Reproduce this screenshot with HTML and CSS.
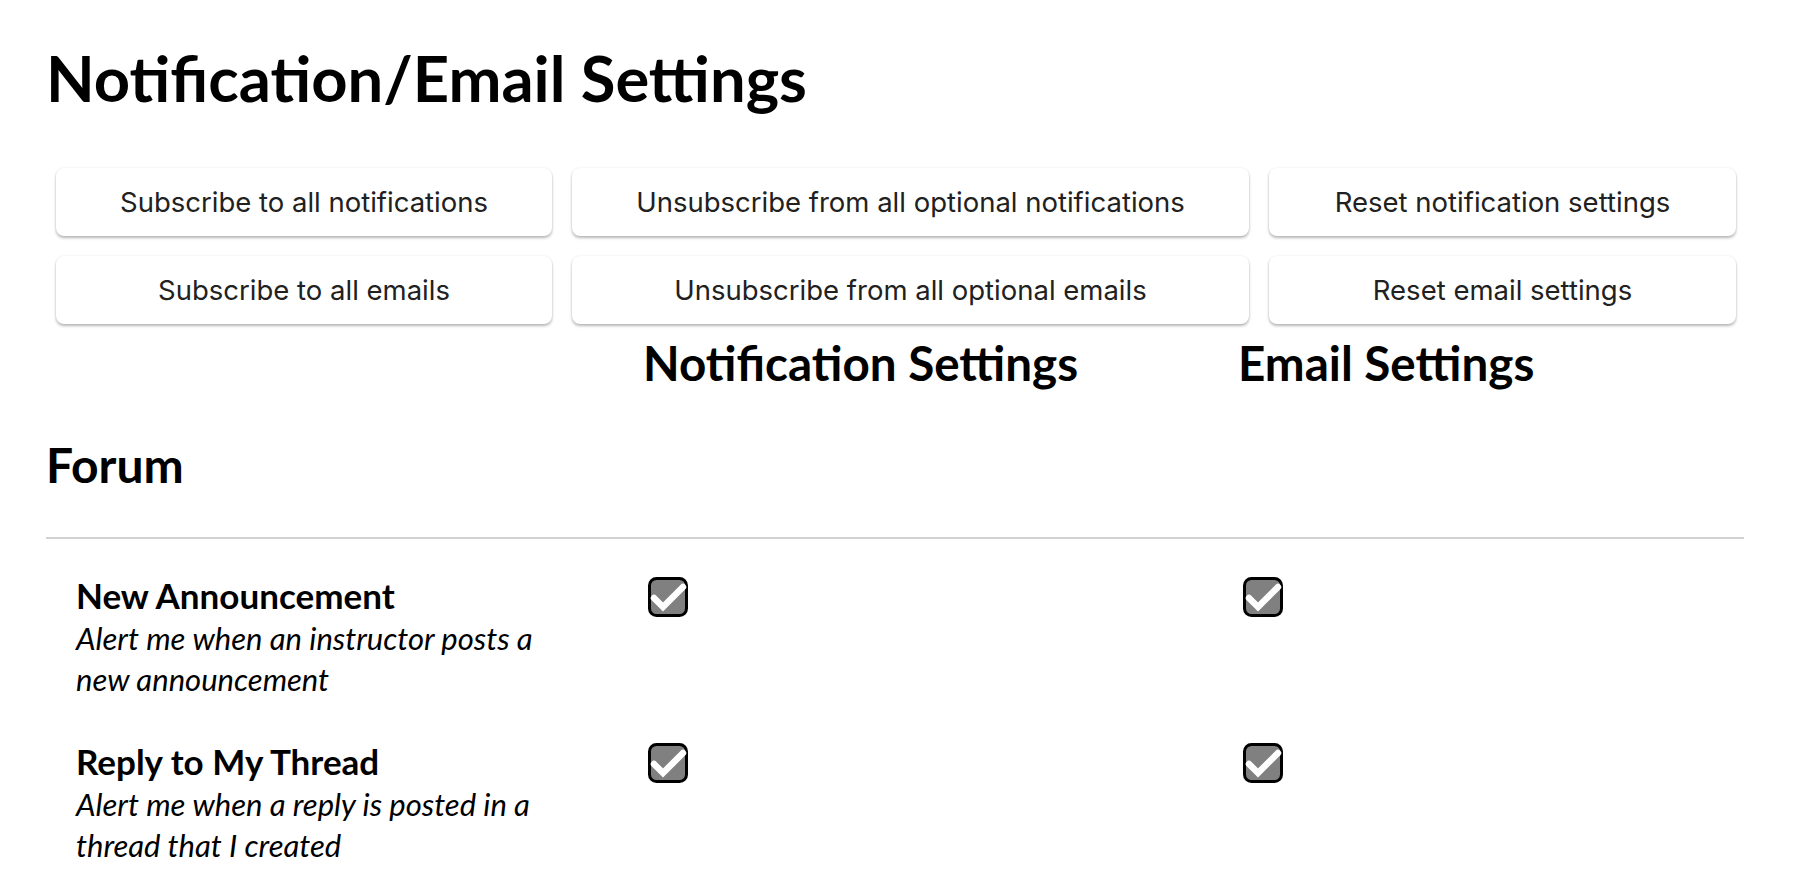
FILE: index.html
```html
<!DOCTYPE html>
<html lang="en">
<head>
<meta charset="utf-8">
<title>Notification/Email Settings</title>
<link rel="stylesheet" href="styles.css">
</head>
<body>
<div class="page">
  <h1 class="title">Notification/Email Settings</h1>

  <div class="actions">
    <button class="btn">Subscribe to all notifications</button>
    <button class="btn">Unsubscribe from all optional notifications</button>
    <button class="btn">Reset notification settings</button>
    <button class="btn">Subscribe to all emails</button>
    <button class="btn">Unsubscribe from all optional emails</button>
    <button class="btn">Reset email settings</button>
  </div>

  <div class="col-heads">
    <div></div>
    <h2 class="col-head">Notification Settings</h2>
    <h2 class="col-head">Email Settings</h2>
  </div>

  <section class="group">
    <h2 class="group-title">Forum</h2>
    <div class="divider"></div>
    <div class="rows">
      <div class="row">
        <div class="label">
          <div class="name">New Announcement</div>
          <div class="desc">Alert me when an instructor posts a new announcement</div>
        </div>
        <div class="cell">
          <span class="check"><svg viewBox="0 0 40 40" width="40" height="40"><rect x="1.5" y="1.5" width="37" height="37" rx="7" ry="7" fill="#808080" stroke="#000" stroke-width="3"/><path d="M6 21 L15 30 L35 10" fill="none" stroke="#fff" stroke-width="6.5" stroke-linecap="round" stroke-linejoin="miter"/></svg></span>
        </div>
        <div class="cell">
          <span class="check"><svg viewBox="0 0 40 40" width="40" height="40"><rect x="1.5" y="1.5" width="37" height="37" rx="7" ry="7" fill="#808080" stroke="#000" stroke-width="3"/><path d="M6 21 L15 30 L35 10" fill="none" stroke="#fff" stroke-width="6.5" stroke-linecap="round" stroke-linejoin="miter"/></svg></span>
        </div>
      </div>
      <div class="row">
        <div class="label">
          <div class="name">Reply to My Thread</div>
          <div class="desc">Alert me when a reply is posted in a thread that I created</div>
        </div>
        <div class="cell">
          <span class="check"><svg viewBox="0 0 40 40" width="40" height="40"><rect x="1.5" y="1.5" width="37" height="37" rx="7" ry="7" fill="#808080" stroke="#000" stroke-width="3"/><path d="M6 21 L15 30 L35 10" fill="none" stroke="#fff" stroke-width="6.5" stroke-linecap="round" stroke-linejoin="miter"/></svg></span>
        </div>
        <div class="cell">
          <span class="check"><svg viewBox="0 0 40 40" width="40" height="40"><rect x="1.5" y="1.5" width="37" height="37" rx="7" ry="7" fill="#808080" stroke="#000" stroke-width="3"/><path d="M6 21 L15 30 L35 10" fill="none" stroke="#fff" stroke-width="6.5" stroke-linecap="round" stroke-linejoin="miter"/></svg></span>
        </div>
      </div>
    </div>
  </section>
</div>
</body>
</html>
```
FILE: styles.css
```css
* { box-sizing: border-box; }

html, body {
  margin: 0;
  padding: 0;
  background: #fff;
  color: #000;
  font-family: Lato, "Noto Sans", sans-serif;
}

.page {
  padding: 0 58px 0 46px;
  overflow: hidden;
  height: 894px;
}

.title {
  margin: 39px 0 0;
  font-size: 63.3px;
  line-height: 77px;
  font-weight: 700;
}

.actions {
  margin-top: 52px;
  padding: 0 11px 0 10px;
  display: grid;
  grid-template-columns: 496px 677px 467px;
  column-gap: 20px;
  row-gap: 20px;
}

.btn {
  height: 68px;
  border: none;
  border-radius: 8px;
  background: #fff;
  color: #212121;
  font-family: Inter, Roboto, sans-serif;
  font-size: 27.5px;
  font-weight: 400;
  box-shadow: 0 2px 3px rgba(0, 0, 0, 0.28), 0 0 2px rgba(0, 0, 0, 0.08);
  cursor: pointer;
  padding: 0;
}

.col-heads {
  margin-top: 10px;
  display: grid;
  grid-template-columns: 597px 595px auto;
}

.col-head {
  margin: 0;
  font-size: 47.6px;
  line-height: 58px;
  font-weight: 700;
}

.group-title {
  margin: 43px 0 0;
  font-size: 48px;
  line-height: 60px;
  font-weight: 700;
}

.divider {
  margin-top: 42px;
  height: 2px;
  background: #d2d2d2;
}

.rows {
  padding-top: 34px;
  display: flex;
  flex-direction: column;
  gap: 39px;
}

.row {
  display: grid;
  grid-template-columns: 597px 595px auto;
  align-items: start;
}

.label {
  padding-left: 30px;
  padding-right: 90px;
}

.name {
  font-size: 35px;
  line-height: 45px;
  font-weight: 700;
}

.desc {
  font-size: 31px;
  line-height: 41px;
  font-style: italic;
}

.cell {
  padding-top: 4px;
  padding-left: 5px;
}

.check {
  display: block;
  width: 40px;
  height: 40px;
}

.check svg { display: block; }
```
